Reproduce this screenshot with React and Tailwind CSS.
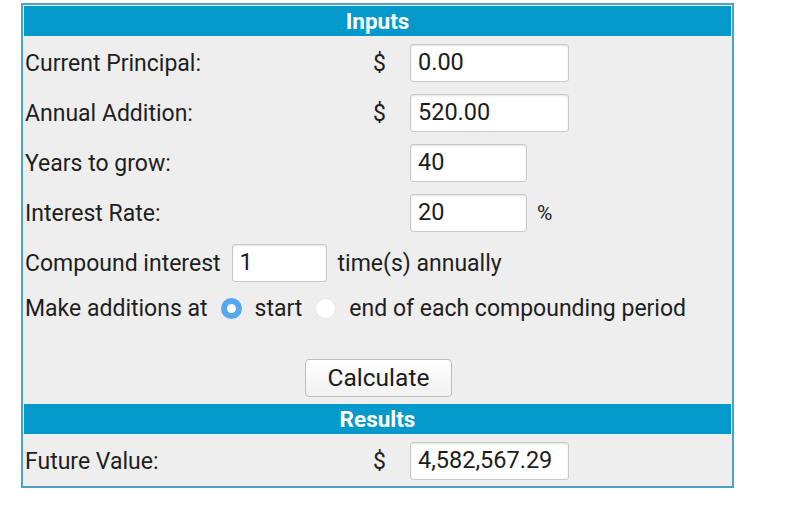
import React from "react";

function Field({ value, w = "w-[159px]" }) {
  return (
    <div
      className={`${w} h-[38px] bg-white border border-[#c9c9c9] rounded-[3px] shadow-[inset_0_1px_2px_rgba(0,0,0,0.12)] flex items-center pl-[7px] text-[23.5px] text-[#1c1c1c]`}
    >
      {value}
    </div>
  );
}

function Row({ label, dollar, value, w, suffix }) {
  return (
    <div className="flex items-center h-[38px]">
      <div className="w-[349px] pl-[1px]">{label}</div>
      <div className="w-[37px]">{dollar ? "$" : ""}</div>
      <Field value={value} w={w} />
      {suffix && <div className="ml-[10px] text-[21px]">{suffix}</div>}
    </div>
  );
}

export default function App() {
  return (
    <div
      className="bg-white w-[799px] h-[524px] pt-[3px] pl-[21px] text-[#1e1e1e]"
      style={{ fontFamily: "Roboto, 'Liberation Sans', sans-serif" }}
    >
      <div className="w-[713px] h-[485px] border-2 border-[#4aa3c4] p-[1px] bg-[#eeeeee] text-[23px] leading-none flex flex-col">
        <div className="h-[30px] bg-[#0399cb] text-white font-bold text-[22.5px] flex items-center justify-center shrink-0">
          Inputs
        </div>
        <div className="flex flex-col gap-[12px] mt-[8px]">
          <Row label="Current Principal:" dollar value="0.00" />
          <Row label="Annual Addition:" dollar value="520.00" />
          <Row label="Years to grow:" value="40" w="w-[117px]" />
          <Row label="Interest Rate:" value="20" w="w-[117px]" suffix="%" />
          <div className="flex items-center h-[38px] pl-[1px]">
            <span>Compound interest</span>
            <div className="ml-[11px]">
              <Field value="1" w="w-[95px]" />
            </div>
            <span className="ml-[11px]">time(s) annually</span>
          </div>
          <div className="flex items-center h-[28px] pl-[1px]">
            <span>Make additions at</span>
            <span className="ml-[13px] w-[21px] h-[21px] rounded-full border-[6px] border-[#55a8ef] bg-white inline-block" />
            <span className="ml-[13px]">start</span>
            <span className="ml-[13px] w-[21px] h-[21px] rounded-full border border-[#e6e6e6] bg-white inline-block" />
            <span className="ml-[13px]">end of each compounding period</span>
          </div>
        </div>
        <div className="mt-[37px] flex pl-[281px]">
          <button className="w-[147px] h-[38px] border border-[#bdbdbd] rounded-[4px] bg-gradient-to-b from-[#ffffff] to-[#f1f1f1] text-[24.5px] text-[#1c1c1c] flex items-center justify-center">
            Calculate
          </button>
        </div>
        <div className="mt-[7px] h-[30px] bg-[#0399cb] text-white font-bold text-[22.5px] flex items-center justify-center shrink-0">
          Results
        </div>
        <div className="mt-[8px]">
          <Row label="Future Value:" dollar value="4,582,567.29" />
        </div>
      </div>
    </div>
  );
}
